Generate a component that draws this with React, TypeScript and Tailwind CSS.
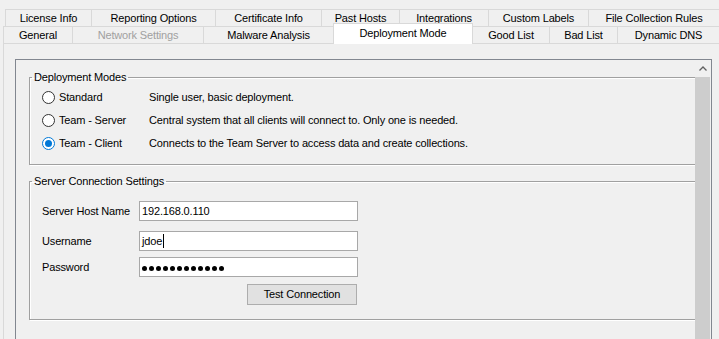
import React from "react";

const topTabs: [string, string][] = [
  ["License Info", "w-[86px]"],
  ["Reporting Options", "w-[124px]"],
  ["Certificate Info", "w-[106px]"],
  ["Past Hosts", "w-[78px]"],
  ["Integrations", "w-[89px]"],
  ["Custom Labels", "w-[100px]"],
  ["File Collection Rules", "w-[131px]"],
];

function Radio({ checked }: { checked?: boolean }) {
  return checked ? (
    <span className="flex h-[13px] w-[13px] items-center justify-center rounded-full border border-[#0078d7] bg-white">
      <span className="h-[7px] w-[7px] rounded-full bg-[#0078d7]" />
    </span>
  ) : (
    <span className="h-[13px] w-[13px] rounded-full border border-[#333333] bg-white" />
  );
}

function ModeRow({ label, desc, checked }: { label: string; desc: string; checked?: boolean }) {
  return (
    <div className="flex h-[23px] items-center pl-[12px]">
      <Radio checked={checked} />
      <span className="ml-[4px] w-[90px]">{label}</span>
      <span>{desc}</span>
    </div>
  );
}

export default function App() {
  return (
    <div className="h-[339px] w-[719px] overflow-hidden bg-[#f0f0f0] pt-[9px] font-['Liberation_Sans',Arial,sans-serif] text-[11px] tracking-[-0.15px] text-black">
      {/* top tab row */}
      <div className="flex h-[17px] pl-[5px]">
        {topTabs.map(([t, w]) => (
          <div key={t} className={`${w} flex shrink-0 items-center justify-center border-l border-t border-[#d9d9d9] pt-px leading-none`}>
            {t}
          </div>
        ))}
      </div>
      {/* bottom tab row */}
      <div className="flex h-[17px] items-end pl-[3px]">
        <div className="flex h-[17px] w-[69px] shrink-0 items-center justify-center border-l border-t border-[#d9d9d9] leading-none">General</div>
        <div className="flex h-[17px] w-[131px] shrink-0 items-center justify-center border-l border-t border-[#d9d9d9] leading-none text-[#a0a0a0]">Network Settings</div>
        <div className="flex h-[17px] w-[130px] shrink-0 items-center justify-center border-l border-t border-[#d9d9d9] leading-none">Malware Analysis</div>
        <div className="relative z-10 -mb-px flex h-[21px] w-[140px] shrink-0 items-center justify-center border-x border-t border-[#d9d9d9] bg-white pb-[2px] leading-none">Deployment Mode</div>
        <div className="flex h-[17px] w-[76px] shrink-0 items-center justify-center border-t border-[#d9d9d9] leading-none">Good List</div>
        <div className="flex h-[17px] w-[68px] shrink-0 items-center justify-center border-l border-t border-[#d9d9d9] leading-none">Bad List</div>
        <div className="flex h-[17px] w-[102px] shrink-0 items-center justify-center border-l border-t border-[#d9d9d9] leading-none">Dynamic DNS</div>
      </div>
      {/* tab content panel */}
      <div className="ml-[3px] h-[400px] border-l border-t border-[#d9d9d9] pl-[11px] pt-[15px]">
        <div className="flex h-[320px] w-[697px] border border-[#828790]">
          <div className="flex-1 overflow-hidden pl-[13px]">
            <fieldset className="-mr-[6px] mt-[10px] border border-[#a0a0a0] pb-[9px] pt-[2px] shadow-[inset_1px_1px_0_#ffffff,1px_1px_0_#ffffff]">
              <legend className="ml-[2px] px-[2px] leading-[14px]">Deployment Modes</legend>
              <ModeRow label="Standard" desc="Single user, basic deployment." />
              <ModeRow label="Team - Server" desc="Central system that all clients will connect to. Only one is needed." />
              <ModeRow label="Team - Client" desc="Connects to the Team Server to access data and create collections." checked />
            </fieldset>
            <fieldset className="-mr-[6px] mt-[9px] border border-[#a0a0a0] pb-[14px] pt-[13px] shadow-[inset_1px_1px_0_#ffffff,1px_1px_0_#ffffff]">
              <legend className="ml-[2px] px-[2px] leading-[14px]">Server Connection Settings</legend>
              <div className="pl-[12px]">
                <div className="flex h-[20px] items-center">
                  <span className="w-[97px]">Server Host Name</span>
                  <div className="flex h-[20px] w-[219px] items-center border border-[#a8a8a8] bg-white pl-[2px]">192.168.0.110</div>
                </div>
                <div className="mt-[10px] flex h-[20px] items-center">
                  <span className="w-[97px]">Username</span>
                  <div className="flex h-[20px] w-[219px] items-center border border-[#a8a8a8] bg-white pl-[2px]">
                    jdoe<span className="ml-px h-[14px] w-px bg-black" />
                  </div>
                </div>
                <div className="mt-[6px] flex h-[20px] items-center">
                  <span className="w-[97px]">Password</span>
                  <div className="flex h-[20px] w-[219px] items-center gap-[2px] border border-[#a8a8a8] bg-white pl-[2px] pt-[2px]">
                    {Array.from({ length: 12 }).map((_, i) => (
                      <span key={i} className="h-[5px] w-[5px] rounded-full bg-black" />
                    ))}
                  </div>
                </div>
                <div className="mt-[7px] flex">
                  <div className="ml-[205px] flex h-[21px] w-[110px] items-center justify-center border border-[#adadad] bg-[#e1e1e1]">
                    Test Connection
                  </div>
                </div>
              </div>
            </fieldset>
          </div>
          {/* scrollbar */}
          <div className="flex w-[16px] flex-col">
            <div className="flex h-[17px] items-center justify-center">
              <svg width="8" height="5" viewBox="0 0 8 5">
                <polyline points="0.5,4.5 4,1 7.5,4.5" fill="none" stroke="#606060" strokeWidth="1.3" />
              </svg>
            </div>
            <div className="mr-px flex-1 bg-[#cdcdcd]" />
          </div>
        </div>
      </div>
    </div>
  );
}
